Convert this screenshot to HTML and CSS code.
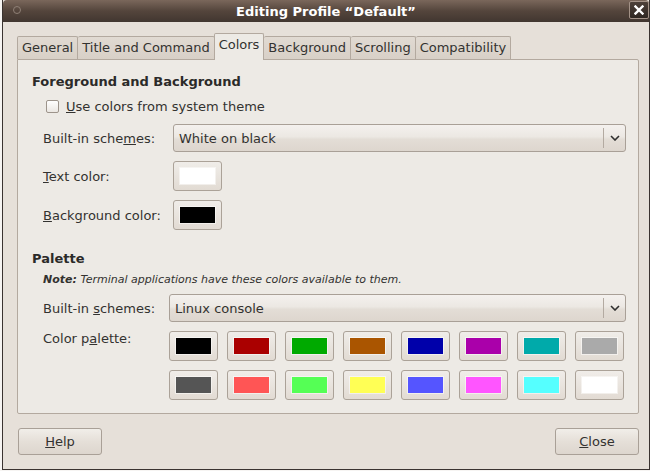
FILE: index.html
```html
<!DOCTYPE html>
<html>

<head>
    <meta charset="UTF-8">
    <meta name="viewport" content="width=device-width, initial-scale=1.0">
    <title>Editing Profile “Default”</title>
    <link rel="stylesheet" href="styles.css">
</head>

<body>
    <div class="window">
        <div class="titlebar">
            <div class="title-left"><span class="menu-dot"></span></div>
            <div class="title">Editing Profile “Default”</div>
            <div class="title-right">
                <span class="close-box">
                    <svg width="10" height="10" viewBox="0 0 10 10">
                        <path d="M1.5 1.5 L8.5 8.5 M8.5 1.5 L1.5 8.5" stroke="#fff" stroke-width="2.4" stroke-linecap="square" />
                    </svg>
                </span>
            </div>
        </div>

        <div class="content">
            <div class="tabs">
                <div class="tab">General</div>
                <div class="tab">Title and Command</div>
                <div class="tab active">Colors</div>
                <div class="tab">Background</div>
                <div class="tab">Scrolling</div>
                <div class="tab">Compatibility</div>
            </div>

            <div class="panel">
                <!-- foreground / background -->
                <div class="section section-fg">
                    <div class="heading">Foreground and Background</div>
                    <label class="check-row">
                        <span class="checkbox"></span>
                        <span><u>U</u>se colors from system theme</span>
                    </label>
                    <div class="row">
                        <span class="label">Built-in sche<u>m</u>es:</span>
                        <div class="combo">
                            <span class="combo-text">White on black</span>
                            <span class="combo-arrow">
                                <svg width="10" height="6" viewBox="0 0 10 6">
                                    <path d="M1 1 L5 5 L9 1" fill="none" stroke="#2f2f2f" stroke-width="1.6" />
                                </svg>
                            </span>
                        </div>
                    </div>
                    <div class="row">
                        <span class="label"><u>T</u>ext color:</span>
                        <span class="color-btn"><span class="swatch" style="background: #ffffff"></span></span>
                    </div>
                    <div class="row">
                        <span class="label"><u>B</u>ackground color:</span>
                        <span class="color-btn"><span class="swatch" style="background: #000000"></span></span>
                    </div>
                </div>

                <!-- palette -->
                <div class="section section-pal">
                    <div class="heading">Palette</div>
                    <div class="note"><b>Note:</b> Terminal applications have these colors available to them.</div>
                    <div class="row row-scheme">
                        <span class="label">Built-in <u>s</u>chemes:</span>
                        <div class="combo">
                            <span class="combo-text">Linux console</span>
                            <span class="combo-arrow">
                                <svg width="10" height="6" viewBox="0 0 10 6">
                                    <path d="M1 1 L5 5 L9 1" fill="none" stroke="#2f2f2f" stroke-width="1.6" />
                                </svg>
                            </span>
                        </div>
                    </div>
                    <div class="row row-palette">
                        <span class="label label-top">Color p<u>a</u>lette:</span>
                        <div class="palette" id="palette"></div>
                    </div>
                </div>
            </div>

            <div class="buttons">
                <button class="btn btn-help"><u>H</u>elp</button>
                <button class="btn"><u>C</u>lose</button>
            </div>
        </div>
    </div>

    <script>
        // Linux console palette
        const colors = [
            "#000000", "#aa0000", "#00aa00", "#aa5500", "#0000aa", "#aa00aa", "#00aaaa", "#aaaaaa",
            "#555555", "#ff5555", "#55ff55", "#ffff55", "#5555ff", "#ff55ff", "#55ffff", "#ffffff"
        ];

        const palette = document.getElementById("palette");
        colors.forEach(function (c) {
            const btn = document.createElement("span");
            btn.className = "color-btn";
            btn.innerHTML = `<span class="swatch" style="background: ${c}"></span>`;
            palette.appendChild(btn);
        });
    </script>
</body>

</html>
```

FILE: styles.css
```css
body {
    margin: 0;
    padding: 0;
    background-color: #f6f4f2;
    font-family: "DejaVu Sans", "Liberation Sans", sans-serif;
    font-size: 13px;
    color: #333230;
}

.window {
    box-sizing: border-box;
    width: 648px;
    height: 470px;
    margin-left: 2px;
    background-color: #e6e0d9;
    border-left: 1px solid #3a3330;
    border-right: 1px solid #3a3330;
    border-bottom: 1px solid #3a3330;
    display: flex;
    flex-direction: column;
}

.titlebar {
    height: 22px;
    display: grid;
    grid-template-columns: 1fr auto 1fr;
    align-items: center;
    background: linear-gradient(#7a675b, #54453c 50%, #413630);
    border-radius: 4px 4px 0 0;
}

.title {
    color: #ffffff;
    font-weight: bold;
    font-size: 13px;
}

.title-left {
    padding-left: 10px;
    display: flex;
}

.menu-dot {
    width: 6px;
    height: 6px;
    border-radius: 50%;
    border: 1px solid #8f8076;
    margin-top: -2px;
}

.title-right {
    display: flex;
    justify-content: flex-end;
    padding-right: 0;
}

.close-box {
    width: 18px;
    height: 16px;
    margin-top: -2px;
    display: flex;
    align-items: center;
    justify-content: center;
    background: linear-gradient(#4d4039, #2f2722);
    border: 1px solid #a39287;
    border-radius: 2px;
}

.content {
    padding: 11px 10px 0 14px;
}

/* tabs */
.tabs {
    display: flex;
    align-items: flex-end;
    height: 26px;
}

.tab {
    box-sizing: border-box;
    height: 23px;
    line-height: 21px;
    padding: 0 4px;
    border: 1px solid #b3a99f;
    border-bottom: none;
    border-left: none;
    border-radius: 2px 2px 0 0;
    background: linear-gradient(#e1dad2, #d8d0c7);
    color: #333230;
}

.tab:first-child {
    border-left: 1px solid #b3a99f;
}

.tab.active {
    height: 26px;
    line-height: 22px;
    margin-bottom: -1px;
    height: 27px;
    position: relative;
    background: #edeae5;
    border-left: 1px solid #b3a99f;
    margin-left: -1px;
}

.panel {
    box-sizing: border-box;
    height: 355px;
    background-color: #edeae5;
    border: 1px solid #b3a99f;
    border-radius: 0 2px 2px 2px;
    padding: 14px 12px 13px 14px;
}

.section {
    display: flex;
    flex-direction: column;
    gap: 9px;
}

.section-pal {
    margin-top: 21px;
    gap: 0;
}

.heading {
    font-weight: bold;
    line-height: 15px;
    color: #2b2a29;
}

.check-row {
    display: flex;
    align-items: center;
    height: 17px;
    padding-left: 14px;
    gap: 7px;
}

.checkbox {
    box-sizing: border-box;
    width: 13px;
    height: 13px;
    border: 1px solid #9d948b;
    border-radius: 2px;
    background: linear-gradient(#ffffff, #ebe7e2);
}

.row {
    display: flex;
    align-items: center;
    padding-left: 11px;
}

.label {
    width: 130px;
    flex: none;
}

.section-pal .label {
    width: 126px;
}

.label-top {
    align-self: flex-start;
    line-height: 15px;
}

.note {
    font-size: 11px;
    font-style: italic;
    line-height: 13px;
    padding-left: 11px;
    margin-top: 7px;
}

.row-scheme {
    margin-top: 8px;
}

.row-palette {
    margin-top: 9px;
}

/* combo box */
.combo {
    box-sizing: border-box;
    flex: 1;
    height: 28px;
    display: flex;
    align-items: center;
    border: 1px solid #a9a097;
    border-radius: 3px;
    background: linear-gradient(#f4f1ee, #ece8e3 45%, #e3ddd6 55%, #ddd6ce);
}

.combo-text {
    flex: 1;
    padding-left: 5px;
}

.combo-arrow {
    width: 21px;
    height: 20px;
    display: flex;
    align-items: center;
    justify-content: center;
    border-left: 1px solid #b3aaa1;
}

/* color buttons */
.color-btn {
    box-sizing: border-box;
    width: 49px;
    height: 30px;
    padding: 6px;
    display: flex;
    border: 1px solid #aba298;
    border-radius: 3px;
    background: linear-gradient(#f0ede9, #e2dbd3);
}

.swatch {
    flex: 1;
    box-shadow: 0 0 0 1px rgba(255, 255, 255, 0.5);
}

.palette {
    display: grid;
    grid-template-columns: repeat(8, 49px);
    gap: 9px;
}

/* dialog buttons */
.buttons {
    display: flex;
    justify-content: space-between;
    margin-top: 14px;
}

.btn {
    width: 84px;
    height: 27px;
    font-family: inherit;
    font-size: 13px;
    color: #333230;
    border: 1px solid #a9a097;
    border-radius: 3px;
    background: linear-gradient(#f1eee9, #e5dfd8 50%, #ddd6ce);
    padding: 0;
}

.btn-help {
    margin-left: 1px;
}
```
